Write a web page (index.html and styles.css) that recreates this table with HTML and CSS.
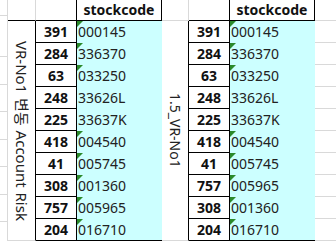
FILE: index.html
```html
<!DOCTYPE html>
<html lang="ko">
<head>
<meta charset="utf-8">
<link rel="stylesheet" href="styles.css">
</head>
<body>
<div class="sheet">
  <div class="col-a">
    <div class="a-cell h15"></div>
    <div class="a-cell h41"></div>
    <div class="a-cell h28"></div>
    <div class="a-cell h27"></div>
    <div class="a-cell h28"></div>
    <div class="a-cell h27"></div>
    <div class="a-cell h28"></div>
    <div class="a-cell h27"></div>
    <div class="a-cell h20"></div>
  </div>

  <div class="group">
    <div class="label-col">
      <div class="label-hd label-hd-1"></div>
      <div class="label-body"><span class="vtext vtext-lg">VR-No1 변동 Account Risk</span></div>
    </div>
    <div class="num-col">
      <div class="num-hd"></div>
      <div class="num">391</div>
      <div class="num">284</div>
      <div class="num">63</div>
      <div class="num">248</div>
      <div class="num">225</div>
      <div class="num">418</div>
      <div class="num">41</div>
      <div class="num">308</div>
      <div class="num">757</div>
      <div class="num">204</div>
    </div>
    <div class="code-col">
      <div class="code-hd">stockcode</div>
      <div class="code flag">000145</div>
      <div class="code flag">336370</div>
      <div class="code flag">033250</div>
      <div class="code">33626L</div>
      <div class="code">33637K</div>
      <div class="code flag">004540</div>
      <div class="code flag">005745</div>
      <div class="code flag">001360</div>
      <div class="code flag">005965</div>
      <div class="code flag last">016710</div>
    </div>
  </div>

  <div class="group">
    <div class="label-col label-col-2">
      <div class="label-hd label-hd-2"></div>
      <div class="label-body"><span class="vtext">1.5_VR-No1</span></div>
    </div>
    <div class="num-col">
      <div class="num-hd"></div>
      <div class="num">391</div>
      <div class="num">284</div>
      <div class="num">63</div>
      <div class="num">248</div>
      <div class="num">225</div>
      <div class="num">418</div>
      <div class="num">41</div>
      <div class="num">757</div>
      <div class="num">308</div>
      <div class="num">204</div>
    </div>
    <div class="code-col">
      <div class="code-hd">stockcode</div>
      <div class="code flag">000145</div>
      <div class="code flag">336370</div>
      <div class="code flag">033250</div>
      <div class="code">33626L</div>
      <div class="code">33637K</div>
      <div class="code flag">004540</div>
      <div class="code flag">005745</div>
      <div class="code flag">005965</div>
      <div class="code flag">001360</div>
      <div class="code flag last">016710</div>
    </div>
  </div>

  <div class="col-h">
    <div class="h-cell h-top"></div>
    <div class="h-cell"></div>
    <div class="h-cell"></div>
    <div class="h-cell"></div>
    <div class="h-cell"></div>
    <div class="h-cell"></div>
    <div class="h-cell"></div>
    <div class="h-cell"></div>
    <div class="h-cell"></div>
    <div class="h-cell"></div>
    <div class="h-cell"></div>
  </div>
</div>
</body>
</html>
```

FILE: styles.css
```css
* { box-sizing: border-box; }

html, body {
  margin: 0;
  padding: 0;
  background: #ffffff;
}

body {
  width: 336px;
  height: 241px;
  overflow: hidden;
  font-family: "Noto Sans", "Noto Sans CJK KR", sans-serif;
  font-size: 14px;
  color: #000;
}

.sheet {
  display: flex;
  width: 336px;
  height: 241px;
}

/* column A: plain grid cells */
.col-a {
  width: 8px;
  display: flex;
  flex-direction: column;
  border-right: 1px solid #d9d9d9;
}
.a-cell { border-bottom: 1px solid #d9d9d9; flex: none; }
.h15 { height: 16px; }
.h41 { height: 41px; }
.h28 { height: 28px; }
.h27 { height: 27px; }
.h20 { height: 20px; border-bottom: none; }

.group { display: flex; }

/* merged label column */
.label-col {
  width: 28px;
  display: flex;
  flex-direction: column;
}
.label-col-2 { width: 27px; }
.label-hd {
  height: 21px;
  border-right: 1px solid #d9d9d9;
}
.label-hd-1 { border-bottom: 1px solid #000; }
.label-hd-2 { border-bottom: 1px solid #d9d9d9; }
.label-body {
  height: 220px;
  border-right: 1px solid #000;
  border-bottom: 1px solid #d9d9d9;
  display: flex;
  align-items: center;
  justify-content: center;
}
.vtext {
  writing-mode: vertical-rl;
  text-orientation: sideways;
  white-space: nowrap;
  color: #222;
  line-height: 1;
}
.vtext-lg {
  font-size: 15px;
  word-spacing: 1px;
}

/* numbers */
.num-col {
  width: 41px;
  display: flex;
  flex-direction: column;
}
.num-hd {
  height: 21px;
  border-right: 1px solid #000;
  border-bottom: 1px solid #000;
}
.num {
  height: 22px;
  border-right: 1px solid #000;
  border-bottom: 1px solid #000;
  font-weight: 700;
  text-align: center;
  line-height: 21px;
  color: #111;
}

/* stock codes */
.code-col {
  width: 85px;
  display: flex;
  flex-direction: column;
}
.code-hd {
  height: 21px;
  border-right: 1px solid #000;
  border-bottom: 1px solid #000;
  font-weight: 700;
  text-align: center;
  line-height: 20px;
  color: #111;
}
.code {
  position: relative;
  height: 22px;
  background: #ccffff;
  padding-left: 1px;
  line-height: 22px;
  color: #222;
}
.code.last {
  border-bottom: 1px solid #000;
  line-height: 21px;
}
.flag::before {
  content: "";
  position: absolute;
  left: 0;
  top: 0;
  border-top: 6px solid #2b8a2b;
  border-right: 6px solid transparent;
}

/* far right column */
.col-h {
  flex: 1;
  display: flex;
  flex-direction: column;
}
.h-cell {
  height: 22px;
  border-bottom: 1px solid #d9d9d9;
}
.h-top { height: 21px; }
```
